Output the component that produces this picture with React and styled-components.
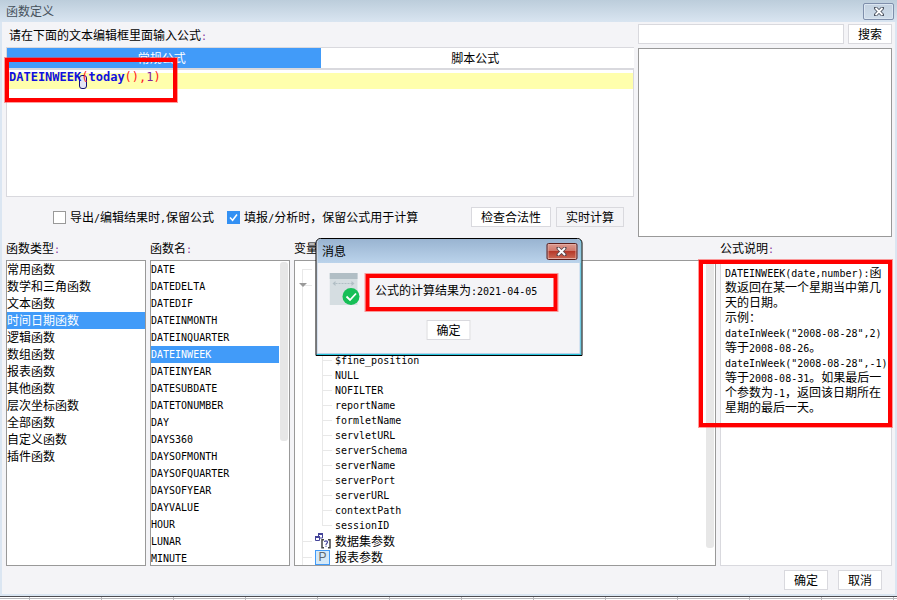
import React from "react";
import styled, { createGlobalStyle, css } from "styled-components";

const colors = {
  face: "#f4f4f7",
  line: "#d9d9de",
  dark: "#999999",
  select: "#419bf9",
  mark: "#ff0000",
};

const GlobalStyle = createGlobalStyle`
  * { box-sizing: border-box; }
  body {
    margin: 0;
    background: #fff;
    color: #000;
    font-family: "Noto Sans CJK SC", sans-serif;
    font-size: 12px;
    line-height: 16px;
  }
  button, input { font: inherit; color: inherit; }
`;

const Page = styled.div`
  display: flex;
  flex-direction: column;
  height: 100vh;
  min-height: 480px;
  overflow: hidden;
`;

const Window = styled.main`
  flex: 1;
  min-height: 0;
  display: flex;
  flex-direction: column;
  position: relative;
  background: ${colors.face};
  border: solid #dbe6f2;
  border-width: 0 2px 2px;
`;

const TitleBar = styled.header`
  flex: none;
  display: flex;
  align-items: center;
  justify-content: space-between;
  height: 22px;
  margin: 0 -2px;
  padding: 0 3px 0 6px;
  background: linear-gradient(#bccddb, #d9e5f1);
  color: #46515c;
`;

const Title = styled.h1`
  margin: 0;
  font-size: 12px;
  font-weight: 400;
`;

const CloseButton = styled.button`
  display: flex;
  align-items: center;
  justify-content: center;
  width: 31px;
  height: 17px;
  padding: 0;
  border: 1px solid #7f8fab;
  border-radius: 2px;
  background: linear-gradient(#c3d1e0, #d0deeb);
  box-shadow: inset 0 0 0 1px #dbe6f1;
  ${(p) =>
    p.$danger &&
    css`
      border-color: #5c1d1a;
      background: linear-gradient(#dc9a8f 0, #cf7568 48%, #b6392a 50%, #cb6a55);
      box-shadow: inset 0 0 0 1px #e3aba2;
    `}
`;

const Body = styled.div`
  flex: 1;
  min-height: 0;
  display: flex;
  flex-direction: column;
  padding: 2px 3px 4px 4px;
`;

const Upper = styled.section`
  flex: none;
  display: grid;
  grid-template-columns: minmax(0, 1fr) 254px;
  gap: 4px;
  height: 213px;
`;

const Column = styled.div`
  display: flex;
  flex-direction: column;
  min-width: 0;
  min-height: 0;
`;

const Prompt = styled.div`
  height: 23px;
  padding: 3px;
`;

const Mono = styled.span`
  font-family: "DejaVu Sans Mono", monospace;
  font-size: 10px;
  line-height: 1;
`;

const Colon = styled(Mono)`
  color: #8a3a9a;
`;

const Tabs = styled.div`
  display: grid;
  grid-template-columns: 1fr 1fr;
  height: 23px;
  border: solid ${colors.line};
  border-width: 1px 0 2px 1px;
  background: #fff;
`;

const Tab = styled.button`
  border: 0;
  padding: 0 4px 0 0;
  background: ${(p) => (p.$active ? colors.select : "#fff")};
  color: ${(p) => (p.$active ? "#fff" : "#000")};
`;

const Editor = styled.div`
  position: relative;
  height: 127px;
  border: solid ${colors.line};
  border-width: 0 1px 1px;
  background: linear-gradient(#ffffac, #ffffac) 0 3px / 100% 16px no-repeat #fff;
`;

const Code = styled.div`
  position: relative;
  padding: 0 2px;
  outline: 0;
  color: #ff2020;
  font-family: "DejaVu Sans Mono", monospace;
  font-size: 12px;
  line-height: 15px;
  white-space: pre;
`;

const Keyword = styled.b`
  color: #1010e0;
`;

const Digits = styled.span`
  color: #8020a0;
`;

const BracketMatch = styled.span`
  position: absolute;
  left: 72px;
  top: 5px;
  width: 8px;
  height: 14px;
  border: 1px solid #10107a;
  border-radius: 3px;
  background: #e4e4f6;
`;

const Marker = styled.span`
  position: absolute;
  border: 4px solid ${colors.mark};
  outline: 1px solid rgba(255, 60, 60, 0.5);
  pointer-events: none;
`;

const EditorMarker = styled(Marker)`
  left: -2px;
  top: -12px;
  width: 172px;
  height: 44px;
`;

const NoteMarker = styled(Marker)`
  left: -22px;
  right: -1px;
  top: -1px;
  height: 167px;
`;

const ResultMarker = styled(Marker)`
  left: 49px;
  top: 11px;
  width: 192px;
  height: 37px;
`;

const Options = styled.div`
  flex: 1;
  display: flex;
  align-items: center;
  gap: 13px;
  padding: 0 10px 0 47px;
`;

const Spacer = styled.span`
  flex: 1;
`;

const Check = styled.label`
  display: flex;
  align-items: center;
  gap: 4px;
  white-space: nowrap;
`;

const CheckBox = styled.input`
  appearance: none;
  width: 13px;
  height: 13px;
  margin: 0;
  border: 1px solid ${colors.dark};
  background: #fff;
  &:checked {
    border-color: #3390f3;
    background: #3390f3
      url("data:image/svg+xml,%3Csvg xmlns='http://www.w3.org/2000/svg' viewBox='0 0 11 11'%3E%3Cpath d='M2 5.5l2.6 2.8L9 2.5' fill='none' stroke='white' stroke-width='1.5'/%3E%3C/svg%3E");
  }
`;

const ButtonPair = styled.div`
  display: flex;
  gap: ${(p) => p.$gap || 5}px;
`;

const Button = styled.button`
  height: 20px;
  padding: 0 9px;
  border: 1px solid ${colors.line};
  background: ${(p) => (p.$flat ? colors.face : "#fff")};
  line-height: 16px;
  white-space: nowrap;
`;

const SearchRow = styled.div`
  display: flex;
  gap: 4px;
  margin-bottom: 4px;
`;

const SearchInput = styled.input`
  flex: 1;
  min-width: 0;
  height: 20px;
  padding: 0 4px;
  border: 1px solid ${colors.line};
  background: #fff;
  outline: 0;
`;

const Results = styled.div`
  flex: 1;
  border: 1px solid ${colors.dark};
  background: #fff;
`;

const Lower = styled.section`
  flex: 1;
  min-height: 0;
  display: grid;
  grid-template-columns: 140px 140px minmax(0, 1fr) 172px;
  grid-template-rows: minmax(0, 1fr);
  gap: 4px;
`;

const Heading = styled.h2`
  flex: none;
  height: 23px;
  margin: 0;
  padding: 3px 0;
  font-size: 12px;
  font-weight: 400;
`;

const Panel = styled.div`
  position: relative;
  flex: 1;
  min-height: 0;
  border: 1px solid ${(p) => (p.$light ? colors.line : colors.dark)};
  background: #fff;
`;

const List = styled.ul`
  height: 100%;
  margin: 0;
  padding: 0 ${(p) => (p.$bar ? 10 : 0)}px 0 0;
  overflow: hidden;
  list-style: none;
`;

const Item = styled.li`
  height: 17px;
  line-height: 15px;
  white-space: nowrap;
  background: ${(p) => (p.$active ? colors.select : "transparent")};
  color: ${(p) => (p.$active ? "#fff" : "#000")};
`;

const NameItem = styled(Item)`
  font-family: "DejaVu Sans Mono", monospace;
  font-size: 10px;
  line-height: 17px;
`;

const ScrollThumb = styled.span`
  position: absolute;
  top: 1px;
  right: 1px;
  bottom: ${(p) => p.$bottom}px;
  width: 8px;
  border-radius: 3px;
  background: #e7e7e7;
`;

const Tree = styled.ul`
  height: 100%;
  margin: 0;
  padding: 0 0 0 7px;
  overflow: hidden;
  list-style: none;
`;

const TreeNode = styled.li`
  border-left: 1px solid #e8e8e8;
`;

const FirstNode = styled(TreeNode)`
  height: 16px;
  padding-top: 8px;
  border-left: 0;
`;

const Corner = styled.span`
  display: block;
  width: 10px;
  height: 8px;
  border: solid #e8e8e8;
  border-width: 1px 0 0 1px;
`;

const Branch = styled.div`
  display: flex;
  align-items: center;
  height: 16px;
  white-space: nowrap;
  &::before {
    content: "";
    width: 9px;
    height: 1px;
    margin-right: 3px;
    background: #e8e8e8;
  }
  svg {
    flex: none;
    margin-right: 4px;
  }
`;

const Arrow = styled.span`
  width: 0;
  margin: 0 0 0 -16px;
  border: 4px solid transparent;
  border-top-color: #999;
  border-bottom: 0;
`;

const Leaves = styled.ul`
  margin: 0 0 0 19px;
  padding: 0;
  list-style: none;
`;

const Leaf = styled.li`
  display: flex;
  align-items: center;
  height: 15px;
  font-family: "DejaVu Sans Mono", monospace;
  font-size: 10px;
  white-space: nowrap;
  background: linear-gradient(#e8e8e8, #e8e8e8) 0 0 / 1px 100% no-repeat;
  &:last-child {
    background-size: 1px 50%;
  }
  &::before {
    content: "";
    width: 10px;
    height: 1px;
    margin-right: 3px;
    background: #e8e8e8;
  }
`;

const Note = styled.div`
  padding: 3px 0 0 4px;
  line-height: 15px;
  white-space: nowrap;
`;

const NoteLine = styled.p`
  height: 15px;
  margin: 0;
`;

const Footer = styled.footer`
  flex: none;
  display: flex;
  justify-content: flex-end;
  padding: 4px 10px 0 0;
`;

const Dialog = styled.div`
  position: absolute;
  left: 50%;
  top: 50%;
  width: 267px;
  height: 118px;
  transform: translate(-50%, -50%);
  display: flex;
  flex-direction: column;
  border: 1px solid #000;
  border-radius: 5px 5px 0 0;
  background: ${colors.face};
  box-shadow: inset -1px -1px 0 #27c4dc, inset 1px 0 0 #b9cde2, inset -2px -2px 0 #b9d1e8;
`;

const DialogTitle = styled.header`
  flex: none;
  display: flex;
  align-items: center;
  justify-content: space-between;
  height: 24px;
  margin: 0 1px;
  padding: 0 3px 0 5px;
  border-radius: 4px 4px 0 0;
  background: linear-gradient(#99b4d1, #bbd3eb);
`;

const DialogBody = styled.div`
  position: relative;
  flex: 1;
  display: flex;
  flex-direction: column;
  align-items: center;
  justify-content: space-between;
  padding: 10px 0 15px;
`;

const Message = styled.div`
  align-self: stretch;
  display: flex;
  align-items: center;
  gap: 15px;
  padding-left: 13px;
`;

const SheetEdge = styled.div`
  flex: none;
  height: 4px;
  border-top: 1px solid #4c4c52;
  background:
    linear-gradient(#b8b8bc, #b8b8bc) 0 1px / 100% 1px no-repeat,
    repeating-linear-gradient(90deg, transparent 0 29px, #b8b8bc 29px 30px, transparent 30px 72px);
`;

const Cross = ({ dark }) => (
  <svg width="12" height="9" viewBox="0 0 12 9" aria-hidden="true">
    <path d="M1 0h3l2 2 2-2h3v2L8.500 4.500 11 7v2H8L6 7 4 9H1V7l2.500-2.500L1 2z" fill={dark} />
    <path d="M2.500 1l7 7M9.500 1l-7 7" stroke="#fff" strokeWidth="1.800" fill="none" />
  </svg>
);

const DatasetIcon = () => (
  <svg width="16" height="16" viewBox="0 0 16 16" aria-hidden="true">
    <path d="M3.5 3V.5h4V5H5" fill="#fff" stroke="#45459a" />
    <path d="M3 1h5" stroke="#45459a" strokeWidth="2" />
    <path d="M.5 3.500h4V7.500h-4z" fill="#fff" stroke="#45459a" />
    <path d="M0 4h5" stroke="#45459a" strokeWidth="2" />
    <path d="M9 6.750H7v8h2M13 6.750h2v8h-2" fill="none" stroke="#444" strokeWidth="1.5" />
    <path d="M9.500 9c0-1.500 3-1.500 3 0S11 10.300 11 12M11 12.800v1" fill="none" stroke="#45459a" strokeWidth="1.2" />
  </svg>
);

const ParamBox = styled.span`
  display: flex;
  align-items: center;
  justify-content: center;
  width: 15px;
  height: 15px;
  margin-right: 5px;
  border: 1px solid #419bf9;
  background: #d5e9f8;
  color: #606870;
  font: 12px/13px "Liberation Sans", sans-serif;
`;

const SuccessIcon = () => (
  <svg width="31" height="33" viewBox="0 0 31 33" aria-hidden="true">
    <path d="M0 0h28v32H0z" fill="#d5dde1" />
    <path d="M0 0h28v6H0z" fill="#b1bec5" />
    <path d="M6 10.500h17" stroke="#b1bec5" strokeDasharray="2 1" />
    <path d="M3 10.500l3-2.500v5zM25 10.500l-3-2.500v5z" fill="#b1bec5" />
    <circle cx="21.500" cy="23.500" r="8.500" fill="#17bf57" />
    <path d="M17 23.500l3.500 3.500 6-6.500" fill="none" stroke="#fff" strokeWidth="1.800" />
  </svg>
);

const categories = [
  "常用函数", "数学和三角函数", "文本函数", "时间日期函数", "逻辑函数", "数组函数",
  "报表函数", "其他函数", "层次坐标函数", "全部函数", "自定义函数", "插件函数",
];

const functionNames = [
  "DATE", "DATEDELTA", "DATEDIF", "DATEINMONTH", "DATEINQUARTER", "DATEINWEEK",
  "DATEINYEAR", "DATESUBDATE", "DATETONUMBER", "DAY", "DAYS360", "DAYSOFMONTH",
  "DAYSOFQUARTER", "DAYSOFYEAR", "DAYVALUE", "HOUR", "LUNAR", "MINUTE",
];

const variables = [
  "", "", "", "",
  "$fine_position", "NULL", "NOFILTER", "reportName", "formletName", "servletURL",
  "serverSchema", "serverName", "serverPort", "serverURL", "contextPath", "sessionID",
];

const noteLines = [
  "DATEINWEEK(date,number):函",
  "数返回在某一个星期当中第几",
  "天的日期。",
  "示例：",
  'dateInWeek("2008-08-28",2)',
  "等于2008-08-26。",
  'dateInWeek("2008-08-28",-1)',
  "等于2008-08-31。如果最后一",
  "个参数为-1，返回该日期所在",
  "星期的最后一天。",
];

const Mixed = ({ text }) =>
  text.split(/([\x20-\x7e]+)/).map((part, i) => (i % 2 ? <Mono key={i}>{part}</Mono> : part));

export default function App() {
  return (
    <Page>
      <GlobalStyle />
      <Window>
        <TitleBar>
          <Title>函数定义</Title>
          <CloseButton aria-label="关闭"><Cross dark="#4d5562" /></CloseButton>
        </TitleBar>
        <Body>
          <Upper>
            <Column>
              <Prompt id="prompt">请在下面的文本编辑框里面输入公式<Colon>:</Colon></Prompt>
              <Tabs role="tablist">
                <Tab role="tab" aria-selected="true" $active>常规公式</Tab>
                <Tab role="tab" aria-selected="false">脚本公式</Tab>
              </Tabs>
              <Editor>
                <BracketMatch />
                <Code role="textbox" aria-labelledby="prompt" contentEditable suppressContentEditableWarning spellCheck={false}>
                  <Keyword>DATEINWEEK</Keyword>(<Keyword>today</Keyword>(),<Digits>1</Digits>)
                </Code>
                <EditorMarker />
              </Editor>
              <Options>
                <Check>
                  <CheckBox type="checkbox" />
                  <span><Mixed text="导出/编辑结果时,保留公式" /></span>
                </Check>
                <Check>
                  <CheckBox type="checkbox" defaultChecked />
                  <span><Mixed text="填报/分析时，保留公式用于计算" /></span>
                </Check>
                <Spacer />
                <ButtonPair>
                  <Button>检查合法性</Button>
                  <Button $flat>实时计算</Button>
                </ButtonPair>
              </Options>
            </Column>
            <Column>
              <SearchRow>
                <SearchInput type="text" aria-label="搜索" />
                <Button>搜索</Button>
              </SearchRow>
              <Results />
            </Column>
          </Upper>
          <Lower>
            <Column>
              <Heading>函数类型<Colon>:</Colon></Heading>
              <Panel>
                <List role="listbox" aria-label="函数类型">
                  {categories.map((c) => (
                    <Item key={c} role="option" aria-selected={c === "时间日期函数"} $active={c === "时间日期函数"}>{c}</Item>
                  ))}
                </List>
              </Panel>
            </Column>
            <Column>
              <Heading>函数名<Colon>:</Colon></Heading>
              <Panel>
                <List role="listbox" aria-label="函数名" $bar>
                  {functionNames.map((n) => (
                    <NameItem key={n} role="option" aria-selected={n === "DATEINWEEK"} $active={n === "DATEINWEEK"}>{n}</NameItem>
                  ))}
                </List>
                <ScrollThumb $bottom={124} />
              </Panel>
            </Column>
            <Column>
              <Heading>变量</Heading>
              <Panel>
                <Tree>
                  <FirstNode><Corner /></FirstNode>
                  <TreeNode>
                    <Branch><Arrow /></Branch>
                    <Leaves>
                      {variables.map((v, i) => <Leaf key={i}>{v}</Leaf>)}
                    </Leaves>
                  </TreeNode>
                  <TreeNode><Branch><DatasetIcon />数据集参数</Branch></TreeNode>
                  <TreeNode><Branch><ParamBox>P</ParamBox>报表参数</Branch></TreeNode>
                </Tree>
                <ScrollThumb $bottom={17} />
              </Panel>
            </Column>
            <Column>
              <Heading>公式说明<Colon>:</Colon></Heading>
              <Panel $light>
                <Note>
                  {noteLines.map((l) => <NoteLine key={l}><Mixed text={l} /></NoteLine>)}
                </Note>
                <NoteMarker />
              </Panel>
            </Column>
          </Lower>
          <Footer>
            <ButtonPair $gap={10}>
              <Button>确定</Button>
              <Button>取消</Button>
            </ButtonPair>
          </Footer>
        </Body>
        <Dialog role="dialog" aria-labelledby="message-title">
          <DialogTitle>
            <span id="message-title">消息</span>
            <CloseButton aria-label="关闭" $danger><Cross dark="#5b4a50" /></CloseButton>
          </DialogTitle>
          <DialogBody>
            <Message>
              <SuccessIcon />
              <span><Mixed text="公式的计算结果为:2021-04-05" /></span>
            </Message>
            <Button>确定</Button>
            <ResultMarker />
          </DialogBody>
        </Dialog>
      </Window>
      <SheetEdge />
    </Page>
  );
}
